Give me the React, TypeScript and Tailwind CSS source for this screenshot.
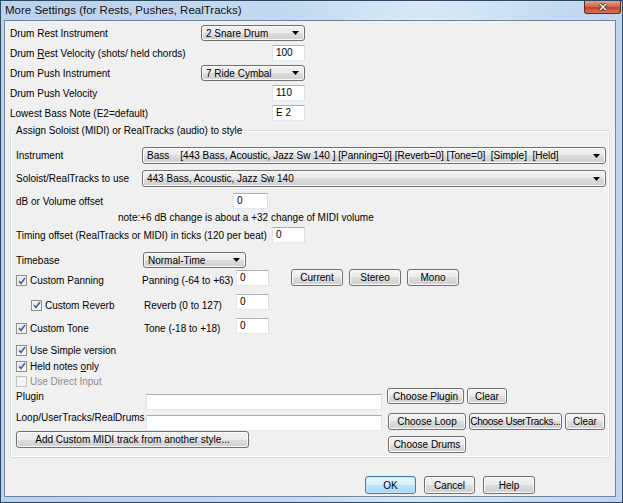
import React from 'react';

const btn =
  'flex items-center justify-center whitespace-nowrap rounded-[3px] border border-[#707070] bg-[linear-gradient(to_bottom,#f2f2f2_0%,#ebebeb_50%,#dddddd_50%,#cfcfcf_100%)] shadow-[inset_0_0_0_1px_#fbfbfb] text-black';

const inputCls = 'flex items-start bg-white border border-[#abadb3] border-l-[#e2e3ea] border-r-[#dbdfe6] border-b-[#e3e9ef] pl-[3px] pt-[1px] leading-[12px]';

function Button({ label, className = '' }: { label: string; className?: string }) {
  return <div className={`${btn} ${className}`}>{label}</div>;
}

function Dropdown({ value, className = '' }: { value: string; className?: string }) {
  return (
    <div className={`${btn} justify-between! pl-[4px] pr-[5px] ${className}`}>
      <span className="whitespace-pre truncate">{value}</span>
      <svg width="7" height="4" viewBox="0 0 7 4" className="shrink-0">
        <path d="M0 0h7L3.5 4z" fill="#000" />
      </svg>
    </div>
  );
}

function TextBox({ value = '', className = '' }: { value?: string; className?: string }) {
  return <div className={`${inputCls} ${className}`}>{value}</div>;
}

function Check({ checked = true, disabled = false }: { checked?: boolean; disabled?: boolean }) {
  return (
    <div
      className={`flex h-[11px] w-[11px] shrink-0 items-center justify-center border ${
        disabled
          ? 'border-[#c0c0c0] bg-[#f4f4f4]'
          : 'border-[#8e8f8f] bg-[linear-gradient(135deg,#dcdcdc,#fefefe)] shadow-[inset_0_0_0_1px_#f4f4f4]'
      }`}
    >
      {checked && (
        <svg width="8" height="8" viewBox="0 0 8 8">
          <path d="M1 4.2l2 2.2L7 1" stroke="#4a5f97" strokeWidth="1.6" fill="none" />
        </svg>
      )}
    </div>
  );
}

export default function App() {
  return (
    <div className="flex h-[503px] w-[623px] flex-col border border-[#2e4864] bg-[linear-gradient(to_right,#bad2ea_0%,#c3d9ef_45%,#d9e8f6_68%,#bed5ed_100%)] font-['Liberation_Sans',Arial,sans-serif] text-[10px] text-black">
      {/* title bar */}
      <div className="flex h-[19px] shrink-0 items-start justify-between">
        <div className="pl-[4px] pt-[3px] text-[11.5px] leading-[13px] text-[#111]">
          More Settings (for Rests, Pushes, RealTracks)
        </div>
        <div className="mr-[1px] flex h-[13px] w-[37px] items-center justify-center rounded-b-[3px] border border-t-0 border-[#5a2a22] bg-[linear-gradient(to_bottom,#e6a08e_0%,#d06a52_45%,#c0442c_55%,#d8745a_100%)]">
          <svg width="10" height="8" viewBox="0 0 10 8">
            <path d="M2 1l6 6M8 1L2 7" stroke="#3a1a14" strokeWidth="3" />
            <path d="M2 1l6 6M8 1L2 7" stroke="#fff" strokeWidth="1.6" />
          </svg>
        </div>
      </div>

      {/* client */}
      <div className="ml-[3px] mr-[6px] h-[477px] shrink-0 border border-[#6f87a3] bg-[#f0f0f0]">
        <div className="ml-[5px] w-[295px] pt-[2px]">
          <div className="flex h-[20px] items-center justify-between">
            <span>Drum Rest Instrument</span>
            <Dropdown value="2 Snare Drum" className="h-[16px] w-[104px]" />
          </div>
          <div className="flex h-[20px] items-center justify-between">
            <span>
              Drum <span className="underline">R</span>est Velocity (shots/ held chords)
            </span>
            <TextBox value="100" className="h-[16px] w-[33px]" />
          </div>
          <div className="flex h-[20px] items-center justify-between">
            <span>Drum Push Instrument</span>
            <Dropdown value="7 Ride Cymbal" className="h-[16px] w-[104px]" />
          </div>
          <div className="flex h-[20px] items-center justify-between">
            <span>Drum Push Velocity</span>
            <TextBox value="110" className="h-[16px] w-[33px]" />
          </div>
          <div className="flex h-[20px] items-center justify-between">
            <span>Lowest Bass Note (E2=default)</span>
            <TextBox value="E 2" className="h-[16px] w-[33px]" />
          </div>
        </div>

        {/* group box */}
        <div className="relative ml-[5px] mt-[7px] h-[328px] w-[600px] rounded-[3px] border border-[#d5dfe5] shadow-[inset_0_0_0_1px_#fff]">
          <span className="absolute -top-[6px] left-[4px] bg-[#f0f0f0] px-[1px] leading-[12px]">
            Assign Soloist (MIDI) or RealTracks (audio) to style
          </span>
          <div className="flex flex-col pl-[5px] pt-[16px]">
            <div className="flex h-[17px] items-center">
              <span className="w-[126px]">Instrument</span>
              <Dropdown
                value="Bass    [443 Bass, Acoustic, Jazz Sw 140 ] [Panning=0] [Reverb=0] [Tone=0]  [Simple]  [Held]"
                className="h-[17px] w-[464px]"
              />
            </div>
            <div className="mt-[6px] flex h-[17px] items-center">
              <span className="w-[126px]">Soloist/RealTracks to use</span>
              <Dropdown value="443 Bass, Acoustic, Jazz Sw 140" className="h-[17px] w-[464px]" />
            </div>
            <div className="mt-[6px] flex h-[16px] items-center">
              <span className="w-[217px]">dB or Volume offset</span>
              <TextBox value="0" className="h-[16px] w-[35px]" />
            </div>
            <div className="mt-[2px] h-[14px] pl-[102px] leading-[14px]">
              note:+6 dB change is about a +32 change of MIDI volume
            </div>
            <div className="mt-[2px] flex h-[16px] items-center">
              <span className="w-[256px]">Timing offset (RealTracks or MIDI) in ticks (120 per beat)</span>
              <TextBox value="0" className="h-[16px] w-[33px]" />
            </div>
            <div className="mt-[9px] flex h-[16px] items-center">
              <span className="w-[127px]">Timebase</span>
              <Dropdown value="Normal-Time" className="h-[16px] w-[103px]" />
            </div>

            <div className="mt-[1px] flex h-[17px] items-center">
              <div className="flex w-[126px] items-center gap-[3px] pt-[6px]">
                <Check />
                <span>Custom Panning</span>
              </div>
              <span className="w-[94px] pt-[6px]">Panning (-64 to +63)</span>
              <TextBox value="0" className="h-[16px] w-[33px]" />
              <div className="ml-[22px] flex gap-[6px]">
                <Button label="Current" className="h-[17px] w-[52px]" />
                <Button label="Stereo" className="h-[17px] w-[52px]" />
                <Button label="Mono" className="h-[17px] w-[52px]" />
              </div>
            </div>
            <div className="mt-[8px] flex h-[16px] items-center">
              <div className="flex w-[128px] items-center gap-[3px] pl-[15px] pt-[6px]">
                <Check />
                <span>Custom Reverb</span>
              </div>
              <span className="w-[92px] pt-[6px]">Reverb (0 to 127)</span>
              <TextBox value="0" className="h-[16px] w-[33px]" />
            </div>
            <div className="mt-[8px] flex h-[16px] items-center">
              <div className="flex w-[128px] items-center gap-[3px] pt-[4px]">
                <Check />
                <span>Custom Tone</span>
              </div>
              <span className="w-[92px] pt-[4px]">Tone (-18 to +18)</span>
              <TextBox value="0" className="h-[16px] w-[33px]" />
            </div>

            <div className="mt-[9px] flex h-[14px] items-center gap-[3px]">
              <Check />
              <span>Use Simple version</span>
            </div>
            <div className="mt-[2px] flex h-[14px] items-center gap-[3px]">
              <Check />
              <span>
                Held notes <span className="underline">o</span>nly
              </span>
            </div>
            <div className="mt-[1px] flex h-[14px] items-center gap-[3px] text-[#8d8d8d]">
              <Check checked={false} disabled />
              <span>Use Direct Input</span>
            </div>

            <div className="flex h-[22px] items-start">
              <span className="mt-[3px] w-[130px] leading-[12px]">Plugin</span>
              <TextBox className="mt-[6px] h-[16px] w-[236px]" />
              <Button label="Choose Plugin" className="ml-[5px] h-[16px] w-[77px]" />
              <Button label="Clear" className="ml-[3px] h-[16px] w-[40px]" />
            </div>
            <div className="mt-[2px] flex h-[18px] items-start">
              <span className="w-[130px] leading-[12px]">Loop/UserTracks/RealDrums</span>
              <TextBox className="mt-[3px] h-[16px] w-[236px]" />
              <Button label="Choose Loop" className="ml-[6px] mt-[1px] h-[17px] w-[78px]" />
              <Button label="Choose UserTracks..." className="ml-[3px] mt-[1px] h-[17px] w-[93px] tracking-[-0.3px]" />
              <Button label="Clear" className="ml-[3px] mt-[1px] h-[17px] w-[40px]" />
            </div>
            <div className="mt-[1px] flex h-[22px] items-start">
              <Button label="Add Custom MIDI track from another style..." className="h-[17px] w-[233px]" />
              <Button label="Choose Drums" className="ml-[139px] mt-[5px] h-[17px] w-[78px]" />
            </div>
          </div>
        </div>

        <div className="mt-[18px] flex pl-[360px] gap-[8px]">
          <div className="flex h-[18px] w-[51px] items-center justify-center rounded-[3px] border border-[#3c7fb1] bg-[linear-gradient(to_bottom,#eaf6fd_0%,#d9f0fc_50%,#bee6fd_50%,#a7d9f5_100%)] shadow-[inset_0_0_0_1px_#c5e6f8]">
            OK
          </div>
          <Button label="Cancel" className="h-[18px] w-[51px]" />
          <Button label="Help" className="h-[18px] w-[52px]" />
        </div>
      </div>
    </div>
  );
}
